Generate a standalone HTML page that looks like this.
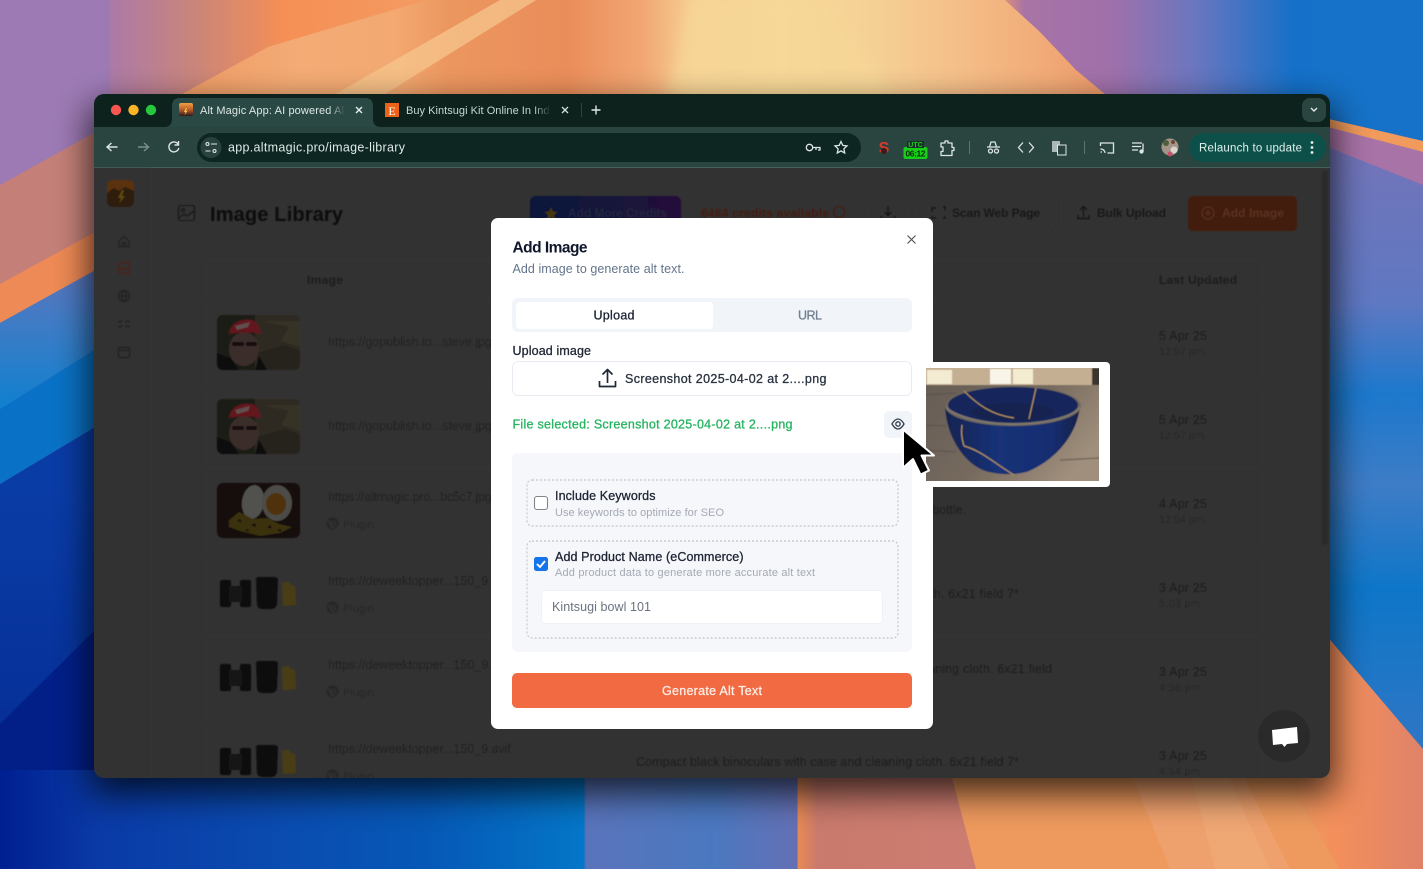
<!DOCTYPE html>
<html lang="en"><head><meta charset="utf-8"><title>Add Image</title>
<style>
html,body{margin:0;padding:0;width:1423px;height:869px;overflow:hidden;background:#123}
svg{display:block;font-family:"Liberation Sans",sans-serif}
.m{stroke-width:.28;paint-order:stroke}
</style></head><body>
<svg xmlns="http://www.w3.org/2000/svg" width="1423" height="869" viewBox="0 0 1423 869">
<defs>
<linearGradient id="topb" x1="0" x2="1423" y1="0" y2="0" gradientUnits="userSpaceOnUse">
<stop offset="0" stop-color="#7b78c4"/><stop offset=".07" stop-color="#a878ac"/><stop offset=".14" stop-color="#cb8678"/><stop offset=".2" stop-color="#f58f55"/><stop offset=".3" stop-color="#f49b62"/><stop offset=".7" stop-color="#f09a68"/><stop offset=".72" stop-color="#a874a6"/><stop offset=".78" stop-color="#a070aa"/><stop offset=".84" stop-color="#6a76bf"/><stop offset=".91" stop-color="#1470c8"/><stop offset="1" stop-color="#1877cc"/>
</linearGradient>
<linearGradient id="mtn" x1="182" x2="1250" y1="0" y2="0" gradientUnits="userSpaceOnUse">
<stop offset="0" stop-color="#ee9c66"/><stop offset=".11" stop-color="#f4ab75"/><stop offset=".2" stop-color="#f3a971"/><stop offset=".25" stop-color="#ec965f"/><stop offset=".36" stop-color="#ea8d5a"/><stop offset=".43" stop-color="#f1a672"/><stop offset=".48" stop-color="#f6cf94"/><stop offset=".56" stop-color="#f7d898"/><stop offset=".65" stop-color="#f5d095"/><stop offset=".72" stop-color="#f5c08a"/><stop offset=".81" stop-color="#f1aa77"/><stop offset=".89" stop-color="#ea9262"/><stop offset="1" stop-color="#e27f58"/>
</linearGradient>
<linearGradient id="lb1" x1="0" x2="0" y1="262" y2="409" gradientUnits="userSpaceOnUse"><stop offset="0" stop-color="#5f74ba"/><stop offset=".45" stop-color="#3c7cc6"/><stop offset="1" stop-color="#0f80cf"/></linearGradient>
<linearGradient id="lb2" x1="0" x2="0" y1="484" y2="869" gradientUnits="userSpaceOnUse"><stop offset="0" stop-color="#0a3ca6"/><stop offset=".55" stop-color="#06329a"/><stop offset="1" stop-color="#021f88"/></linearGradient>
<linearGradient id="rightb" x1="0" x2="0" y1="150" y2="760" gradientUnits="userSpaceOnUse">
<stop offset="0" stop-color="#7274b8"/><stop offset=".25" stop-color="#5f78c2"/><stop offset=".4" stop-color="#1c78cc"/><stop offset=".55" stop-color="#3e7cc6"/><stop offset=".72" stop-color="#0e76c8"/><stop offset="1" stop-color="#3176c4"/>
</linearGradient>
<linearGradient id="botb" x1="0" x2="1423" y1="0" y2="0" gradientUnits="userSpaceOnUse">
<stop offset="0" stop-color="#001f90"/><stop offset=".07" stop-color="#0a3aa6"/><stop offset=".2" stop-color="#0a4cb0"/><stop offset=".3" stop-color="#0658b6"/><stop offset=".41" stop-color="#0476c8"/><stop offset=".412" stop-color="#5a74bb"/><stop offset=".5" stop-color="#4a78c0"/><stop offset=".56" stop-color="#6470b4"/><stop offset=".561" stop-color="#e88a55"/><stop offset=".575" stop-color="#c97a6c"/><stop offset=".66" stop-color="#cc7c70"/><stop offset="1" stop-color="#cc7c70"/>
</linearGradient>
<linearGradient id="br" x1="1282" x2="1423" y1="0" y2="0" gradientUnits="userSpaceOnUse"><stop offset="0" stop-color="#ef9a5e"/><stop offset=".4" stop-color="#f38f5c"/><stop offset="1" stop-color="#df8268"/></linearGradient>
<linearGradient id="credits" x1="530" x2="681" y1="0" y2="0" gradientUnits="userSpaceOnUse"><stop offset="0" stop-color="#09183a"/><stop offset="1" stop-color="#24103a"/></linearGradient>
<linearGradient id="fade1" x1="328" x2="345" y1="0" y2="0" gradientUnits="userSpaceOnUse"><stop offset="0" stop-color="#2c4a44" stop-opacity="0"/><stop offset="1" stop-color="#2c4a44"/></linearGradient>
<linearGradient id="fade2" x1="534" x2="551" y1="0" y2="0" gradientUnits="userSpaceOnUse"><stop offset="0" stop-color="#07221f" stop-opacity="0"/><stop offset="1" stop-color="#07221f"/></linearGradient>
<linearGradient id="fav" x1="0" x2="0" y1="0" y2="1"><stop offset="0" stop-color="#f0a040"/><stop offset=".55" stop-color="#b8562a"/><stop offset="1" stop-color="#2a1c1c"/></linearGradient>
<linearGradient id="bowl" x1="0" x2="1" y1="0" y2="0"><stop offset="0" stop-color="#122350"/><stop offset=".4" stop-color="#1a3278"/><stop offset=".8" stop-color="#172d70"/><stop offset="1" stop-color="#112148"/></linearGradient>
<linearGradient id="table" x1="0" x2="1" y1="0" y2=".6"><stop offset="0" stop-color="#625a54"/><stop offset=".6" stop-color="#766a5e"/><stop offset="1" stop-color="#a08f7c"/></linearGradient>
<filter id="b5" x="-5%" y="-5%" width="110%" height="110%"><feGaussianBlur stdDeviation=".55"/></filter>
<filter id="b3" x="-5%" y="-5%" width="110%" height="110%"><feGaussianBlur stdDeviation=".3"/></filter>
<filter id="b6" x="-5%" y="-5%" width="110%" height="110%"><feGaussianBlur stdDeviation=".65"/></filter>
<filter id="soft" filterUnits="userSpaceOnUse" x="100" y="-30" width="1250" height="200"><feGaussianBlur stdDeviation="7"/></filter>
<filter id="sh" filterUnits="userSpaceOnUse" x="0" y="0" width="1423" height="869"><feGaussianBlur stdDeviation="17"/></filter>
<clipPath id="win"><rect x="94" y="94" width="1236" height="684" rx="10"/></clipPath>
<clipPath id="bowlclip"><rect x="926" y="368" width="173" height="113"/></clipPath>
<clipPath id="thumb"><rect x="0" y="0" width="83" height="55" rx="6"/></clipPath>
<g id="person"><g clip-path="url(#thumb)"><rect width="83" height="55" fill="#1c1a16"/><rect x="38" width="45" height="55" fill="#2e2a22"/><path d="M44 6l28 6-8 14 19 6V6z" fill="#363026"/><path d="M40 38l28-8 15 6v19H40z" fill="#25221c"/><ellipse cx="27" cy="34" rx="15" ry="17" fill="#3a2e29"/><path d="M12 19C13 8 24 3 35 5c6 2 8 9 9 14-10-2-22-2-32 0z" fill="#64161f"/><path d="M18 11l15-4-2 5-11 3z" fill="#5e5050"/><rect x="15" y="27" width="12" height="4" rx="2" fill="#120f0d"/><rect x="29" y="27" width="11" height="4" rx="2" fill="#120f0d"/><path d="M0 38l13 5 9 12H0zM50 55l-8-14-4 14z" fill="#100e0c"/></g></g>
<g id="food"><g clip-path="url(#thumb)"><rect width="83" height="55" fill="#13110e"/><ellipse cx="36" cy="19" rx="11" ry="17" fill="#51514d" transform="rotate(8 36 19)"/><ellipse cx="60" cy="20" rx="15" ry="18" fill="#4e4c46"/><ellipse cx="59" cy="21" rx="10" ry="11" fill="#4f320c"/><path d="M12 37l10-8 14 7 14-1 12 6 13 3-12 6-20 3-20-5-11-4z" fill="#3a300c"/><path d="M20 38l3-2 2 3zM34 42l4-2 1 4zM50 45l3-3 2 3zM28 47l3-1 1 3zM60 47l4-1v3z" fill="#110e0a"/></g></g>
<g id="bino"><rect x="3" y="13" width="11" height="27" rx="2" fill="#111"/><rect x="23" y="13" width="11" height="27" rx="2" fill="#111"/><rect x="12" y="19" width="13" height="16" fill="#181818"/><path d="M39 12c0-2 2-2 4-2h14c3 0 4 1 4 3l-1 24c-1 4-3 5-7 5h-8c-3 0-5-2-5-5z" fill="#0d0d0d"/><path d="M65 16l7-1 2 3 4 1 1 19-13 1z" fill="#4a3e14"/></g>
<g id="wp"><circle cx="6.5" cy="6.5" r="6" fill="#262626"/><path d="M2.500 3.500l3.200 8M5 3.500l3.200 8M8 3.500l2.400 6" stroke="#3a3a3a" stroke-width="1" fill="none"/></g>
</defs>

<!-- wallpaper -->
<rect width="1423" height="869" fill="url(#topb)"/>
<polygon points="427,0 1005,0 1040,32 1076,70 1160,140 1250,150 182,150 182,94 268,47 318,32" fill="url(#mtn)"/>
<polygon points="500,0 536,0 382,96 332,96" fill="#f6c68c" opacity=".75"/>
<polygon points="690,0 820,0 890,96 668,96" fill="#f7d898" opacity=".7" filter="url(#soft)"/>
<!-- left bands -->
<polygon points="0,0 110,0 110,124 0,185" fill="#9d7ab4"/>
<polygon points="0,185 110,124 110,225 0,284" fill="#c48078"/>
<polygon points="0,284 110,224 110,262 0,323" fill="#ee8a55"/>
<polygon points="0,323 110,262 110,340 0,409" fill="url(#lb1)"/>
<polygon points="0,409 110,340 110,418 0,484" fill="#0a72c6"/>
<polygon points="0,484 110,418 110,869 0,869" fill="url(#lb2)"/>
<polygon points="0,724 110,615 110,869 0,869" fill="#021f88"/>
<!-- right bands -->
<rect x="1320" y="100" width="103" height="769" fill="url(#rightb)"/>
<polygon points="1320,0 1423,0 1423,141 1320,117" fill="#1672c8"/>
<polygon points="1320,117 1423,141 1423,152 1320,125" fill="#f09a5c"/>
<polygon points="1320,125 1423,152 1423,185 1320,144" fill="#a873a6"/>
<polygon points="1320,628 1423,749 1423,869 1320,869" fill="url(#br)"/>
<!-- bottom -->
<rect x="0" y="770" width="1423" height="99" fill="url(#botb)"/>
<polygon points="950,770 1282,770 1340,869 976,869" fill="#ee9a5e"/>
<polygon points="1130,770 1240,770 1290,869 1170,869" fill="#efa270" opacity=".8"/>
<polygon points="1190,770 1225,770 1270,869 1215,869" fill="#f0aa78" opacity=".7"/>
<polygon points="1282,770 1423,749 1423,869 1340,869" fill="url(#br)"/>
<rect x="90" y="106" width="1244" height="688" fill="#000" opacity=".72" filter="url(#sh)"/>

<!-- browser window -->
<g clip-path="url(#win)"><g filter="url(#b3)">
<rect x="92" y="92" width="1240" height="688" fill="#333"/>
<rect x="92" y="92" width="1240" height="36" fill="#07221f"/>
<rect x="92" y="127" width="1240" height="40" fill="#2c4540"/>
<rect x="92" y="167" width="1240" height="1" fill="#47605a"/>

<!-- dimmed app -->
<g filter="url(#b5)">
<rect x="94" y="168" width="56" height="610" fill="#313131"/>
<rect x="150" y="168" width="1" height="610" fill="#2e2e2e"/>
<rect x="107" y="180" width="27" height="27" rx="6" fill="#2e1a10"/>
<path d="M107 186q0-6 6-6h15q6 0 6 6v5l-9-4-6 4-5-3-7 5z" fill="#5a3010"/>
<path d="M122 190l-4 8h3l-2 6 6-8h-3l2-6z" fill="#5c4a10"/>
<g fill="none" stroke="#232323" stroke-width="1.3">
<path d="M119 241l5-4.500 5 4.500v5.500h-10zM122.500 246.500v-3.500h3v3.500"/>
<rect x="118.500" y="262.500" width="11" height="11" rx="1.500" stroke="#4e2416"/><path d="M119 271l3.500-3 2.500 2 2-1.500 2.500 2M122 266h1" stroke="#4e2416"/>
<circle cx="124" cy="296" r="5.500"/><path d="M118.500 296h11M124 290.500c-3 3-3 8 0 11c3-3 3-8 0-11"/>
<path d="M118.500 321l1.500 1.500 2.500-2.500M125 321.500h5M118.500 326l1.500 1.500 2.500-2.500M125 326.500h5"/>
<rect x="118.500" y="347.500" width="11" height="10" rx="1.500"/><path d="M118.500 350.500h11"/>
</g>
<g fill="none" stroke="#1e1e1e" stroke-width="1.400"><rect x="178.500" y="205.500" width="16" height="15" rx="2"/><circle cx="183" cy="210" r="1.500"/><path d="M179 218l5-4 3 2 7-5"/></g>
<text x="210" y="221" font-size="20" font-weight="700" fill="#080808" textLength="133">Image Library</text>

<rect x="530" y="196" width="151" height="35" rx="6" fill="url(#credits)"/>
<path d="M551 207l2 4.500 4.500.5-3.500 3 1 4.500-4-2.500-4 2.500 1-4.500-3.500-3 4.500-.5z" fill="#463809"/>
<text x="568" y="217" font-size="12" font-weight="700" fill="#22263f" textLength="99">Add More Credits</text>
<text x="701" y="217" font-size="12" font-weight="700" fill="#451d10" textLength="128">6484 credits available</text>
<circle cx="839" cy="212" r="5.500" fill="none" stroke="#451d10" stroke-width="1.200"/>
<rect x="870" y="196" width="37" height="35" rx="6" fill="#313131" stroke="#2e2e2e"/>
<path d="M888 206v9M884.500 212l3.500 3.500 3.500-3.500M881.500 216v3h13v-3" fill="none" stroke="#171717" stroke-width="1.500"/>
<rect x="917.500" y="196.500" width="138" height="34" rx="6" fill="#323232" stroke="#2e2e2e"/>
<path d="M932 212v-4h4M945 208h-1M932 216v2h4M943 218h2v-2M943 207h2v3" fill="none" stroke="#171717" stroke-width="1.400"/>
<text x="952" y="217" font-size="12" font-weight="700" fill="#181818" textLength="88">Scan Web Page</text>
<rect x="1062.500" y="196.500" width="118" height="34" rx="6" fill="#323232" stroke="#2e2e2e"/>
<path d="M1083.500 217v-10M1080 210l3.500-3.500 3.500 3.500M1078 215v3.500h11V215" fill="none" stroke="#171717" stroke-width="1.400"/>
<text x="1097" y="217" font-size="12" font-weight="700" fill="#181818" textLength="69">Bulk Upload</text>
<rect x="1188" y="196" width="109" height="35" rx="5" fill="#421a0c"/>
<circle cx="1208" cy="213" r="6" fill="none" stroke="#5c3222" stroke-width="1.200"/><path d="M1205 213h6M1208 210v6" stroke="#5c3222" stroke-width="1"/>
<text x="1222" y="217" font-size="12" font-weight="700" fill="#5c3222" textLength="62">Add Image</text>

<rect x="205.500" y="260.500" width="1056" height="520" fill="none" stroke="#2f2f2f"/>
<text x="307" y="284" font-size="12" font-weight="700" fill="#1e1e1e" textLength="36">Image</text>
<text x="1159" y="284" font-size="12" font-weight="700" fill="#1e1e1e" textLength="78">Last Updated</text>
<g fill="#2e2e2e"><rect x="205" y="301" width="1056" height="1"/><rect x="205" y="384" width="1056" height="1"/><rect x="205" y="468" width="1056" height="1"/><rect x="205" y="552" width="1056" height="1"/><rect x="205" y="636" width="1056" height="1"/><rect x="205" y="720" width="1056" height="1"/></g>

<use href="#person" x="217" y="315"/><use href="#person" x="217" y="399"/><use href="#food" x="217" y="483"/>
<use href="#bino" x="217" y="567"/><use href="#bino" x="217" y="651"/><use href="#bino" x="217" y="735"/>

<g font-size="12.500" fill="#222">
<text x="328" y="346" textLength="164">https://gopublish.io...steve.jpg</text>
<text x="328" y="430" textLength="164">https://gopublish.io...steve.jpg</text>
<text x="328" y="501" textLength="164">https://altmagic.pro...bc5c7.jpg</text>
<text x="328" y="585" textLength="183">https://deweektopper...150_9.avif</text>
<text x="328" y="669" textLength="183">https://deweektopper...150_9.avif</text>
<text x="328" y="753" textLength="183">https://deweektopper...150_9.avif</text>
</g>
<g font-size="11" fill="#262626">
<use href="#wp" x="326" y="517"/><text x="343" y="528" textLength="31">Plugin</text>
<use href="#wp" x="326" y="601"/><text x="343" y="612" textLength="31">Plugin</text>
<use href="#wp" x="326" y="685"/><text x="343" y="696" textLength="31">Plugin</text>
<use href="#wp" x="326" y="769"/><text x="343" y="780" textLength="31">Plugin</text>
</g>
<g font-size="12.500" fill="#1f1f1f">
<text x="932" y="514" textLength="34">bottle.</text>
<text x="930" y="598" textLength="89">th. 6x21 field 7*</text>
<text x="928" y="673" textLength="124">aning cloth. 6x21 field</text>
<text x="636" y="766" textLength="383">Compact black binoculars with case and cleaning cloth. 6x21 field 7*</text>
</g>
<g font-size="12.500" fill="#1d1d1d">
<text x="1159" y="340" textLength="48">5 Apr 25</text><text x="1159" y="424" textLength="48">5 Apr 25</text><text x="1159" y="508" textLength="48">4 Apr 25</text><text x="1159" y="592" textLength="48">3 Apr 25</text><text x="1159" y="676" textLength="48">3 Apr 25</text><text x="1159" y="760" textLength="48">3 Apr 25</text>
</g>
<g font-size="11" fill="#272727">
<text x="1159" y="355" textLength="45">12:57 pm</text><text x="1159" y="439" textLength="45">12:57 pm</text><text x="1159" y="523" textLength="45">12:54 pm</text><text x="1159" y="607" textLength="41">5:03 pm</text><text x="1159" y="691" textLength="41">4:58 pm</text><text x="1159" y="775" textLength="41">4:54 pm</text>
</g>
<rect x="1322" y="170" width="6" height="375" rx="3" fill="#2a2a2a"/>
</g>
<circle cx="1284" cy="736" r="26" fill="#2b2b2b"/>
<path d="M1272 730l25-3 1 16-11 1-2.500 3-2.500-3-9 1z" fill="#fff"/>

<!-- tabs -->
<path d="M164 127q8 0 8-8v-13q0-8 8-8h185q8 0 8 8v13q0 8 8 8z" fill="#2c4a44"/>
<rect x="179" y="103" width="14" height="13" rx="2" fill="url(#fav)"/>
<path d="M186 108l-2 4h1.500l-1 3 3-4h-1.500l1-3z" fill="#f0d040"/>
<text x="200" y="114" font-size="11" fill="#dbe7e4" textLength="144">Alt Magic App: AI powered Al</text>
<rect x="328" y="100" width="18" height="20" fill="url(#fade1)"/>
<path d="M356 107l6 6M362 107l-6 6" stroke="#e6efec" stroke-width="1.400"/>
<rect x="385" y="103" width="14" height="14" fill="#ea6312"/>
<text x="392" y="115" font-size="12" font-family="Liberation Serif,serif" fill="#fff" text-anchor="middle">E</text>
<text x="406" y="114" font-size="11" fill="#c9d7d3" textLength="146">Buy Kintsugi Kit Online In Indi</text>
<rect x="534" y="100" width="18" height="20" fill="url(#fade2)"/>
<path d="M562 107l6 6M568 107l-6 6" stroke="#d5e0dd" stroke-width="1.300"/>
<rect x="581" y="103" width="1" height="14" fill="#2c4540"/>
<path d="M596 105.500v9M591.500 110h9" stroke="#dfe9e6" stroke-width="1.400"/>
<rect x="1302" y="98" width="24" height="24" rx="8" fill="#2c4540"/>
<path d="M1311 108l3 3 3-3" fill="none" stroke="#dfe9e6" stroke-width="1.400"/>
<circle cx="116" cy="110" r="5.200" fill="#f9564f"/><circle cx="133.500" cy="110" r="5.200" fill="#fbb427"/><circle cx="151" cy="110" r="5.200" fill="#25c63e"/>

<!-- toolbar -->
<g fill="none" stroke="#dce6e3" stroke-width="1.400">
<path d="M117.500 147h-10M111.500 143l-4.500 4 4.500 4"/>
<path d="M138 147h10M144 143l4.500 4-4.500 4" stroke="#7a8f8a"/>
<path d="M178 144a5 5 0 1 0 .8 4M178.500 141v4h-4"/>
</g>
<rect x="197" y="133" width="664" height="29" rx="14.500" fill="#0a2622"/>
<circle cx="211" cy="147.500" r="10.500" fill="#29433e"/>
<g fill="none" stroke="#dce6e3" stroke-width="1.100"><circle cx="207.500" cy="144" r="1.500"/><path d="M211 144h6M205.500 151h5"/><circle cx="214.500" cy="151" r="1.500"/></g>
<text x="228" y="151.500" font-size="12.500" fill="#dfe9e6" textLength="177">app.altmagic.pro/image-library</text>
<g fill="none" stroke="#dce6e3" stroke-width="1.300">
<circle cx="809.500" cy="147.500" r="3.200"/><path d="M813 147.500h7v2.500h-2M816 150v-2.500"/>
<path d="M841 141.500l1.800 3.900 4.200.5-3.100 2.900.8 4.200-3.700-2.100-3.700 2.100.8-4.200-3.100-2.900 4.200-.5z"/>
<path d="M941 143h4v-2h3v2h4v4.500h2v3h-2v5h-11v-4h2v-4.500h-2z" stroke-linejoin="round"/>
</g>
<text x="884" y="153" font-size="16" font-weight="700" fill="#d9392c" text-anchor="middle">S</text>
<circle cx="884" cy="151" r="3" fill="#3a1c18"/>
<rect x="903.500" y="147" width="24" height="12" rx="2" fill="#16cf16"/>
<rect x="907" y="141" width="17" height="7" fill="#143028"/>
<text x="915.500" y="147" font-size="7" fill="#18d018" text-anchor="middle" font-weight="700">UTC</text>
<text x="915.500" y="156.500" font-size="8.500" fill="#0a2a0a" text-anchor="middle" font-weight="700" textLength="20">06:12</text>
<rect x="969" y="141" width="1" height="13" fill="#5b7470"/><rect x="1084" y="141" width="1" height="13" fill="#5b7470"/>
<g fill="none" stroke="#dce6e3" stroke-width="1.300">
<path d="M987 147h13M989.500 147l1.500-5h4l1.500 5"/><circle cx="990.500" cy="151" r="2"/><circle cx="996.500" cy="151" r="2"/>
<path d="M1023 142.500l-4.500 5 4.500 5M1029 142.500l4.500 5-4.500 5"/>
<rect x="1052" y="141" width="8" height="11" fill="#a9bab6" stroke="none"/><rect x="1057.500" y="145" width="8.500" height="10" fill="#2c4540" stroke-width="1"/>
<path d="M1100.500 152h1.500M1100.500 149c3 0 4.500 2 4.500 4M1100.500 146v-3h13v10h-6"/>
<path d="M1132 143h10M1132 146.500h9M1132 150h6"/><path d="M1143 143.500v8"/><circle cx="1141.500" cy="151.500" r="1.500" fill="#dce6e3"/>
</g>
<circle cx="1170" cy="147" r="8.500" fill="#a6948a"/><circle cx="1166" cy="143" r="3" fill="#4f5f3a"/><circle cx="1174" cy="150" r="3.500" fill="#d8d4ce"/><circle cx="1170" cy="154" r="2.500" fill="#c8506a"/><circle cx="1173" cy="142" r="2" fill="#6b4d35"/>
<rect x="1189" y="133" width="137" height="29" rx="14.500" fill="#0b5048"/>
<text x="1199" y="151.500" font-size="11.500" fill="#e2f0ed" textLength="103">Relaunch to update</text>
<circle cx="1312" cy="142.500" r="1.400" fill="#eef5f3"/><circle cx="1312" cy="147.500" r="1.400" fill="#eef5f3"/><circle cx="1312" cy="152.500" r="1.400" fill="#eef5f3"/>
</g></g>

<!-- modal -->
<g filter="url(#b3)">
<rect x="491" y="218" width="442" height="511" rx="7" fill="#fff"/>
<text x="512.500" y="252.500" font-size="15.500" font-weight="700" fill="#0f172a" textLength="75">Add Image</text>
<text x="512.500" y="273" font-size="12.500" fill="#64748b" textLength="172">Add image to generate alt text.</text>
<path d="M907.500 235.500l8 8M915.500 235.500l-8 8" stroke="#555" stroke-width="1.200"/>
<rect x="512" y="298" width="400" height="34" rx="6" fill="#f1f5f9"/>
<rect x="516" y="302" width="197" height="27" rx="4" fill="#fff"/>
<text class="m" x="614" y="319.500" font-size="12.500" fill="#1a2130" stroke="#1a2130" text-anchor="middle" textLength="41">Upload</text>
<text class="m" x="810" y="319.500" font-size="12.500" fill="#717f92" stroke="#717f92" text-anchor="middle" textLength="24">URL</text>
<text class="m" x="512.500" y="355" font-size="12.500" fill="#1d2432" stroke="#1d2432" textLength="78.500">Upload image</text>
<rect x="512.500" y="361.500" width="399" height="34" rx="6" fill="#fff" stroke="#e8ecf2"/>
<path d="M607.500 383v-13M602.500 374.500l5-5 5 5M599.500 381v5.500h16V381" fill="none" stroke="#1f2937" stroke-width="1.700" stroke-linejoin="round"/>
<text class="m" x="625" y="383" font-size="12.500" fill="#28303e" stroke="#28303e" textLength="201.500">Screenshot 2025-04-02 at 2....png</text>
<text class="m" x="512.500" y="428.500" font-size="12.500" fill="#23b35f" stroke="#23b35f" textLength="280">File selected: Screenshot 2025-04-02 at 2....png</text>
<rect x="884" y="411" width="28" height="27" rx="5" fill="#f1f5f9"/>
<path d="M892 424c2-3.500 4-5 6-5s4 1.500 6 5c-2 3.500-4 5-6 5s-4-1.500-6-5z" fill="none" stroke="#333b48" stroke-width="1.300"/><circle cx="898" cy="424" r="2.200" fill="none" stroke="#333b48" stroke-width="1.300"/>

<rect x="512" y="453" width="400" height="199" rx="6" fill="#f5f7fb"/>
<rect x="527" y="480" width="371" height="46" rx="5" fill="none" stroke="#b4b8bf" stroke-width=".9" stroke-dasharray="2 2"/>
<rect x="534.500" y="496.500" width="13" height="13" rx="2.500" fill="#fff" stroke="#80858c" stroke-width="1.100"/>
<text class="m" x="555" y="500" font-size="12.500" fill="#1c2331" stroke="#1c2331" textLength="100.500">Include Keywords</text>
<text x="555" y="516" font-size="11" fill="#a4a9b3" textLength="169">Use keywords to optimize for SEO</text>
<rect x="527" y="541" width="371" height="97" rx="5" fill="none" stroke="#b4b8bf" stroke-width=".9" stroke-dasharray="2 2"/>
<rect x="534" y="557" width="14" height="14" rx="2.500" fill="#1273ea"/>
<path d="M537 564l3 3 5-6" fill="none" stroke="#fff" stroke-width="1.900"/>
<text class="m" x="555" y="561" font-size="12.500" fill="#1c2331" stroke="#1c2331" textLength="188.500">Add Product Name (eCommerce)</text>
<text x="555" y="576" font-size="11" fill="#a4a9b3" textLength="260">Add product data to generate more accurate alt text</text>
<rect x="541.500" y="590.500" width="341" height="33" rx="4" fill="#fff" stroke="#eef1f5"/>
<text x="552" y="611" font-size="12.500" fill="#6b7280" textLength="99">Kintsugi bowl 101</text>
<rect x="512" y="673" width="400" height="35" rx="5" fill="#f26b43"/>
<text class="m" x="712" y="695" font-size="12.500" fill="#fdeee8" stroke="#fdeee8" text-anchor="middle" textLength="100">Generate Alt Text</text>
</g>

<!-- preview -->
<rect x="916" y="362" width="194" height="125" rx="4" fill="#fff"/>
<g clip-path="url(#bowlclip)"><g filter="url(#b6)">
<rect x="920" y="360" width="185" height="125" fill="url(#table)"/>
<rect x="920" y="360" width="185" height="25" fill="#c4af92"/>
<rect x="927" y="370" width="25" height="14" fill="#f4ecd2"/><rect x="990" y="369" width="21" height="15" fill="#f8f4e8"/><rect x="1013" y="369" width="20" height="15" fill="#f4ecd0"/><rect x="1092" y="368" width="8" height="17" fill="#3b3630"/>
<path d="M926 395l30-2M926 425l20 1M926 450l30 2M1060 460l40-2" stroke="#575049" stroke-width="1.500" fill="none" opacity=".6"/>
<path d="M945 405c1 34 22 62 44 67 12 3 30 3 40-1 28-12 49-38 51-66z" fill="url(#bowl)"/>
<ellipse cx="1013" cy="406" rx="68" ry="20" fill="#6e675e"/>
<ellipse cx="1013" cy="405" rx="65" ry="18" fill="#12265c"/>
<ellipse cx="1013" cy="412" rx="42" ry="9" fill="#182450"/>
<path d="M964 391c14 14 28 24 50 27M1036 388l-7 31M962 425c-1 10 0 14 2 21M964 446c18 5 30 17 50 29" stroke="#b8955c" stroke-width="1.200" fill="none"/>
<path d="M946 407c4 6 30 17 67 17s62-9 67-17" stroke="#7f786d" stroke-width="1.800" fill="none"/>
</g></g>

<!-- cursor -->
<path d="M903 429.500L903 468L913 459L920.500 474.500L929 470.500L921.500 455.500L934 455.500Z" fill="#000" stroke="#fff" stroke-width="2" stroke-linejoin="round"/>
</svg>
</body></html>
